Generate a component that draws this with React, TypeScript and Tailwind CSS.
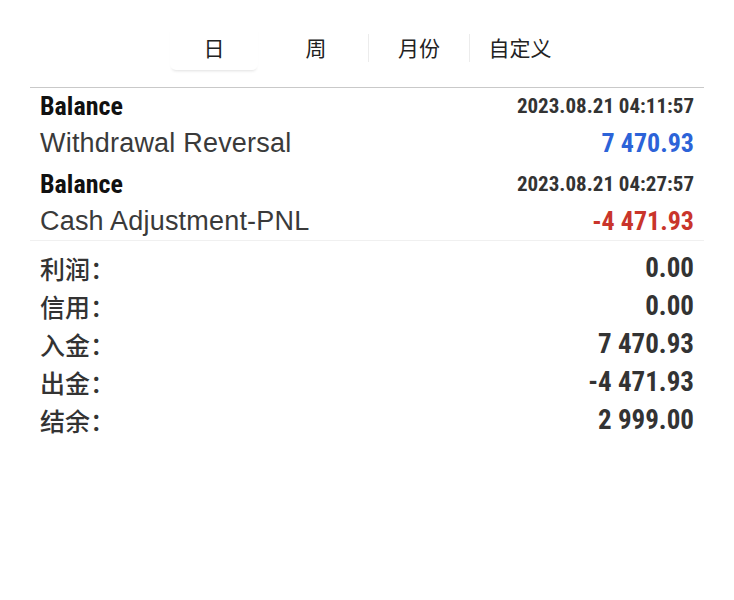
const tabs = ["日", "周", "月份", "自定义"];

const trades = [
  { date: "2023.08.21 04:11:57", note: "Withdrawal Reversal", amount: "7 470.93", color: "text-[#2c63d8]" },
  { date: "2023.08.21 04:27:57", note: "Cash Adjustment-PNL", amount: "-4 471.93", color: "text-[#c9352b]" },
];

const summary = [
  ["利润：", "0.00"],
  ["信用：", "0.00"],
  ["入金：", "7 470.93"],
  ["出金：", "-4 471.93"],
  ["结余：", "2 999.00"],
];

const narrow = "font-['Liberation_Sans_Narrow','Roboto_Condensed','Liberation_Sans',sans-serif]";
const cjk = "font-['Noto_Sans_CJK_SC',sans-serif]";

export default function App() {
  return (
    <div className="w-[734px] h-[600px] bg-white text-[#2b2b2b]">
      <div className="flex items-start h-[87px] pl-[170px] pt-[26px]">
        {tabs.map((t, i) => (
          <div key={t} className="flex items-center">
            {i > 1 && <div className="w-px h-[28px] bg-[#ececec]" />}
            <div
              className={
                "h-[44px] flex items-center justify-center text-[21px] text-[#222] " +
                cjk +
                (i === 0
                  ? " w-[88px] shadow-[0_3px_3px_-2px_rgba(0,0,0,0.12)] rounded-b-[6px]"
                  : i === 1
                    ? " w-[110px] pl-[6px]"
                    : " w-[100px]")
              }
            >
              {t}
            </div>
          </div>
        ))}
      </div>
      <div className="mx-[30px] border-t border-[#c9c9c9]" />
      <div className="px-[40px] flex flex-col gap-[4px]">
        {trades.map((tr) => (
          <div key={tr.date}>
            <div className="flex items-center justify-between h-[36px]">
              <span className={"text-[26px] font-bold text-[#111] leading-none " + narrow}>Balance</span>
              <span className={"text-[21px] font-bold text-[#333] leading-none " + narrow}>{tr.date}</span>
            </div>
            <div className="flex items-center justify-between h-[38px]">
              <span className="text-[27px] text-[#3a3a3a] font-['Liberation_Sans',sans-serif] leading-none tracking-[0.2px]">{tr.note}</span>
              <span className={"text-[26px] font-bold leading-none " + tr.color + " " + narrow}>{tr.amount}</span>
            </div>
          </div>
        ))}
      </div>
      <div className="mx-[30px] border-t border-[#f0f0f0]" />
      <div className="px-[40px] pt-[8px]">
        {summary.map(([k, v]) => (
          <div key={k} className="flex items-center justify-between h-[38px]">
            <span className={"text-[25px] font-medium text-[#333] leading-none " + cjk}>{k}</span>
            <span className={"text-[27px] font-bold text-[#333] leading-none " + narrow}>{v}</span>
          </div>
        ))}
      </div>
    </div>
  );
}
